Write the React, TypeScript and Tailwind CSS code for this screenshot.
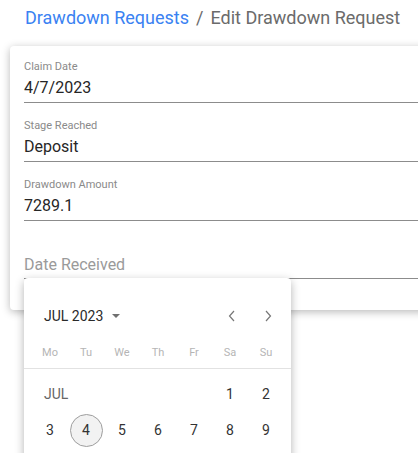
const FIELDS = [
  { label: 'Claim Date', value: '4/7/2023' },
  { label: 'Stage Reached', value: 'Deposit' },
  { label: 'Drawdown Amount', value: '7289.1' },
];

const WEEKDAYS = ['Mo', 'Tu', 'We', 'Th', 'Fr', 'Sa', 'Su'];
const WEEK = [3, 4, 5, 6, 7, 8, 9];

export default function App() {
  return (
    <div
      className="relative h-[453px] w-[418px] overflow-hidden bg-white"
      style={{ fontFamily: 'Roboto, "Liberation Sans", sans-serif' }}
    >
      {/* ── Breadcrumb ── */}
      <div className="flex items-center gap-[7px] pl-[25px] pt-[6px] text-[18px] leading-[24px]">
        <span className="text-[#3a82f2]">Drawdown Requests</span>
        <span className="text-[#6b6b6b]">/</span>
        <span className="text-[#6b6b6b]">Edit Drawdown Request</span>
      </div>

      {/* ── Form card ── */}
      <div className="ml-[10px] mt-[16px] w-[460px] rounded-[4px] bg-white pl-[14px] pt-[14px] pb-[31px] shadow-[0_2px_8px_rgba(0,0,0,0.28)]">
        {FIELDS.map((f, i) => (
          <div key={f.label} className={i > 0 ? 'mt-[16px]' : ''}>
            <div className="text-[11px] leading-[14px] text-[#8a8a8a]">{f.label}</div>
            <div className="mt-[4px] border-b border-[#8c8c8c] pb-[4px] text-[16px] leading-[20px] text-[#262626]">
              {f.value}
            </div>
          </div>
        ))}
        <div className="mt-[34px] border-b border-[#8c8c8c] pb-[3px] text-[16px] leading-[20px] text-[#9a9a9a]">
          Date Received
        </div>
      </div>

      {/* ── Date picker popup ── */}
      <div className="absolute left-[24px] top-[278px] h-[200px] w-[267px] rounded-[4px] bg-white shadow-[0_3px_10px_rgba(0,0,0,0.3)]">
        <div className="flex h-[74px] items-center pl-[20px] pr-[19px] pt-[1px]">
          <span className="text-[14px] leading-[16px] text-[#2a2a2a]">JUL 2023</span>
          <svg width="8" height="4" viewBox="0 0 8 4" className="ml-[9px]">
            <path d="M0 0h8L4 4z" fill="#707070" />
          </svg>
          <div className="ml-auto flex items-center gap-[28px]">
            <svg width="8" height="12" viewBox="0 0 8 12">
              <path d="M6 1L1.5 6L6 11" fill="none" stroke="#777" strokeWidth="1.2" />
            </svg>
            <svg width="8" height="12" viewBox="0 0 8 12">
              <path d="M2 1L6.5 6L2 11" fill="none" stroke="#777" strokeWidth="1.2" />
            </svg>
          </div>
        </div>
        <div className="-mt-[6px] grid grid-cols-7 pl-[8px] pr-[7px] pb-[8px] text-center text-[11px] leading-[14px] text-[#b5b5b5]">
          {WEEKDAYS.map((d) => (
            <span key={d}>{d}</span>
          ))}
        </div>
        <div className="border-t border-[#e2e2e2]" />
        <div className="grid grid-cols-7 pl-[8px] pr-[7px] pt-[14px] text-center text-[14px] text-[#333]">
          <span className="col-span-5 flex h-[22px] items-center pl-[12px] text-left text-[#666]">JUL</span>
          <span className="flex h-[22px] items-center justify-center">1</span>
          <span className="flex h-[22px] items-center justify-center">2</span>
        </div>
        <div className="mt-[8px] grid grid-cols-7 pl-[8px] pr-[7px] text-center text-[14px] text-[#333]">
          {WEEK.map((n) => (
            <div key={n} className="flex h-[34px] items-center justify-center">
              {n === 4 ? (
                <span className="flex h-[33px] w-[33px] items-center justify-center rounded-full border border-[#9e9e9e] bg-[#f2f2f2]">
                  4
                </span>
              ) : (
                <span>{n}</span>
              )}
            </div>
          ))}
        </div>
      </div>
    </div>
  );
}
